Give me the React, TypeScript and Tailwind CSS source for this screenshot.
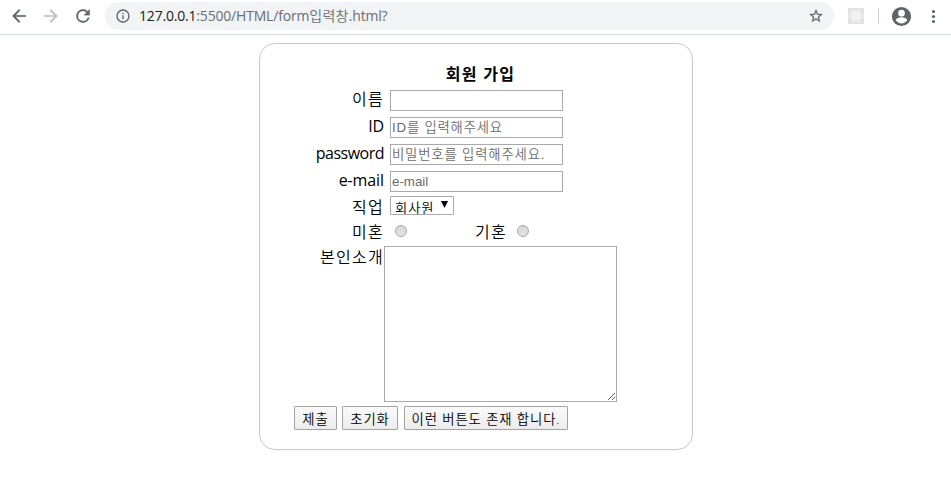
import type { ReactNode } from 'react';

function Toolbar() {
  return (
    <header className="flex h-[35px] items-start border-b border-[#dadce0] bg-white">
      <div className="flex h-8 w-[105px] shrink-0 items-center pl-[9px] text-[#5f6368]">
        <svg className="h-5 w-5 shrink-0" viewBox="0 0 24 24" fill="currentColor" stroke="currentColor" strokeWidth="0.3"><path d="M20 11H7.83l5.59-5.59L12 4l-8 8 8 8 1.41-1.41L7.83 13H20z" /></svg>
        <svg className="ml-[12px] h-5 w-5 shrink-0 text-[#bdbebf]" viewBox="0 0 24 24" fill="currentColor" stroke="currentColor" strokeWidth="0.3"><path d="M12 4l-1.41 1.41L16.17 11H4v2h12.17l-5.58 5.59L12 20l8-8z" /></svg>
        <svg className="ml-[12px] h-5 w-5 shrink-0" viewBox="0 0 24 24" fill="currentColor" stroke="currentColor" strokeWidth="0.3"><path d="M17.65 6.35A7.96 7.96 0 0 0 12 4a8 8 0 1 0 7.73 10h-2.08A6 6 0 1 1 12 6c1.66 0 3.14.69 4.22 1.78L13 11h7V4z" /></svg>
      </div>
      <div className="mt-[2px] flex h-7 w-[729px] shrink-0 items-center rounded-full bg-[#f1f3f4] pl-[10px] pr-[10px]">
        <svg className="h-4 w-4 shrink-0 text-[#5f6368]" viewBox="0 0 24 24" fill="currentColor"><path d="M11 7h2v2h-2zm0 4h2v6h-2zm1-9a10 10 0 1 0 0 20 10 10 0 0 0 0-20zm0 18a8 8 0 1 1 0-16 8 8 0 0 1 0 16z" /></svg>
        <span className="ml-[8px] whitespace-nowrap text-[14px] leading-5 tracking-[-0.19px] text-[#6a6e72]">
          <span className="text-[#202124]">127.0.0.1</span>:5500/HTML/form<span className="font-[350] tracking-[0.3px]">입력창</span>.html?
        </span>
        <svg className="ml-auto h-4 w-4 shrink-0 text-[#5f6368]" viewBox="0 0 24 24" fill="currentColor" stroke="currentColor" strokeWidth="0.3"><path d="M22 9.24l-7.19-.62L12 2 9.19 8.63 2 9.24l5.46 4.73L5.82 21 12 17.27 18.18 21l-1.63-7.03zM12 15.4l-3.76 2.27 1-4.28-3.32-2.88 4.38-.38L12 6.1l1.71 4.04 4.38.38-3.32 2.88 1 4.28z" /></svg>
      </div>
      <div className="flex h-8 items-center pl-[14px] text-[#5f6368]">
        <svg className="h-4 w-4" viewBox="0 0 16 16">
          <rect width="16" height="16" fill="#e2e2e2" />
          <g fill="none" stroke="#fff" strokeWidth="0.8">
            <ellipse cx="8" cy="8" rx="6.5" ry="2.5" />
            <ellipse cx="8" cy="8" rx="6.5" ry="2.5" transform="rotate(60 8 8)" />
            <ellipse cx="8" cy="8" rx="6.5" ry="2.5" transform="rotate(120 8 8)" />
          </g>
          <circle cx="8" cy="8" r="1.3" fill="#fff" />
        </svg>
        <div className="ml-[14px] h-4 w-px bg-[#cbcdd0]" />
        <svg className="ml-[11px] h-[23px] w-[23px]" viewBox="0 0 24 24" fill="currentColor"><path d="M12 2a10 10 0 1 0 0 20 10 10 0 0 0 0-20zm0 3a3.5 3.5 0 1 1 0 7 3.5 3.5 0 0 1 0-7zm0 14.2a7.2 7.2 0 0 1-6-3.22c.03-1.99 4-3.08 6-3.08s5.97 1.09 6 3.08a7.2 7.2 0 0 1-6 3.22z" /></svg>
        <svg className="ml-[13px] h-4 w-4" viewBox="0 0 16 16" fill="currentColor"><circle cx="7.5" cy="3.5" r="1.6" /><circle cx="7.5" cy="8.5" r="1.6" /><circle cx="7.5" cy="13.5" r="1.6" /></svg>
      </div>
    </header>
  );
}

function Label({ children, className = 'font-[350] tracking-[1.3px]' }: { children: ReactNode; className?: string }) {
  return (
    <label className={`flex w-[124px] shrink-0 justify-end whitespace-nowrap text-[16px] leading-6 ${className}`}>
      {children}
    </label>
  );
}

function Field({ label, labelClass, placeholder, inputClass = 'tracking-[0.8px]', type = 'text' }: {
  label: string; labelClass?: string; placeholder?: string; inputClass?: string; type?: string;
}) {
  return (
    <div className="flex h-[27px] items-start">
      <Label className={labelClass}>{label}</Label>
      <input
        type={type}
        placeholder={placeholder}
        className={`ml-[6px] mt-[3px] h-[21px] w-[173px] border border-[#a9a9a9] bg-white px-px font-['Liberation_Sans','Noto_Sans_CJK_KR',sans-serif] text-[13.33px] font-[350] leading-[17px] placeholder:text-[#6b6b6b] ${inputClass}`}
      />
    </div>
  );
}

function Radio() {
  return <input type="radio" name="marital" className="h-3 w-3 shrink-0 appearance-none rounded-full border border-[#a6a6a6] bg-linear-to-b from-[#d8d8d8] to-[#e4e4e4]" />;
}

function Button({ children, className }: { children: ReactNode; className: string }) {
  return (
    <button type="button" className={`flex h-6 items-center justify-center whitespace-nowrap rounded-[1px] border border-[#a3a3a3] bg-linear-to-b from-[#fafafa] to-[#ececec] pt-px text-[13.33px] font-[350] leading-5 ${className}`}>
      {children}
    </button>
  );
}

export default function App() {
  return (
    <div className="h-[483px] w-[951px] overflow-hidden bg-white font-['Open_Sans','Noto_Sans_CJK_KR',sans-serif] text-black">
      <Toolbar />
      <form className="ml-[259px] mt-2 h-[407px] w-[434px] rounded-[16px] border border-[#c8c8c8]">
        <h1 className="flex h-[43px] justify-center pl-[9px] pt-[18px] text-[16px] font-bold leading-6 tracking-[1.3px]">회원 가입</h1>
        <Field label="이름" />
        <Field label="ID" labelClass="tracking-[-0.2px]" placeholder="ID를 입력해주세요" />
        <Field label="password" labelClass="tracking-[-0.5px]" placeholder="비밀번호를 입력해주세요." inputClass="tracking-[0.85px]" />
        <Field label="e-mail" labelClass="tracking-[-0.1px]" placeholder="e-mail" inputClass="tracking-normal" />
        <div className="flex h-6 items-start">
          <Label>직업</Label>
          <button type="button" className="ml-[6px] mt-px flex h-[19px] w-16 items-center overflow-hidden rounded-[1px] border border-[#a9a9a9] bg-white pl-1 text-[13.33px] font-[350] leading-5 tracking-[0.9px]">
            <span className="relative top-[2px] whitespace-nowrap">회사원</span>
            <svg className="mb-[2px] ml-[6px] h-[7px] w-[7px] shrink-0" viewBox="0 0 7 7"><path d="M0 0h7L3.5 7z" /></svg>
          </button>
        </div>
        <div className="flex h-[26px] items-start">
          <Label className="mt-px font-[350] tracking-[1.3px]">미혼</Label>
          <span className="ml-[11px] mt-[6px] flex"><Radio /></span>
          <span className="ml-[68px] mt-px w-[31px] whitespace-nowrap text-[16px] font-[350] leading-6 tracking-[1.2px]">기혼</span>
          <span className="ml-[11px] mt-[6px] flex"><Radio /></span>
        </div>
        <div className="flex h-[161px] items-start">
          <Label>본인소개</Label>
          <textarea className="mt-px h-[156px] w-[233px] resize border border-[#a9a9a9] bg-white" />
        </div>
        <div className="flex pl-[34px]">
          <Button className="w-[43px] tracking-[0.9px]">제출</Button>
          <Button className="ml-[5px] w-14 tracking-[0.9px]">초기화</Button>
          <Button className="ml-[6px] w-[164px] tracking-[0.9px]">이런 버튼도 존재 합니다.</Button>
        </div>
      </form>
    </div>
  );
}
